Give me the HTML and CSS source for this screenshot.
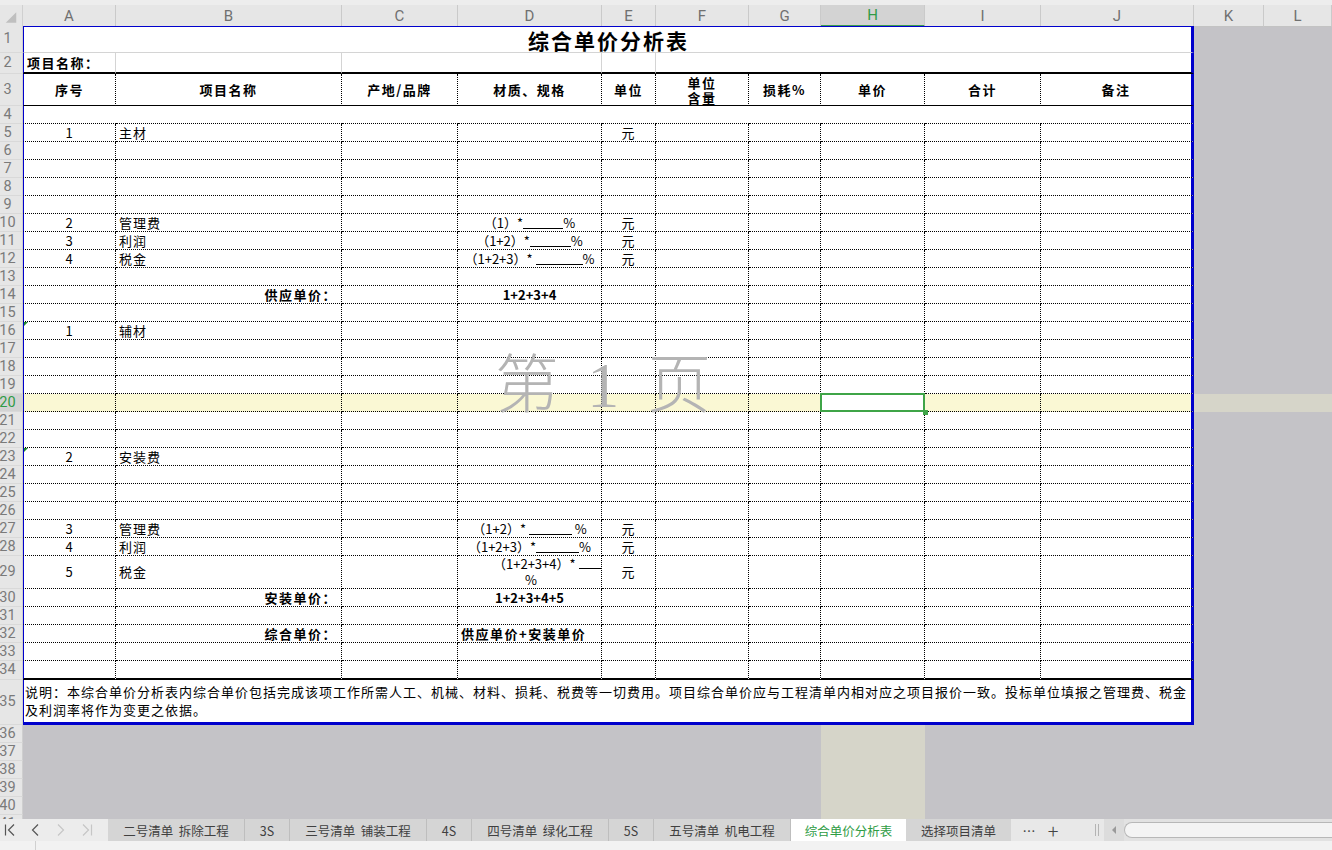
FILE: index.html
```html
<!DOCTYPE html>
<html lang="zh-CN">
<head>
<meta charset="utf-8">
<title>综合单价分析表</title>
<link rel="stylesheet" href="styles.css">
</head>
<body>
<div class="app">
  <div class="sheet">
    <div class="row colhdr">
      <div class="corner"><svg width="23" height="21" viewBox="0 0 23 21"><path d="M17 7 L17 18 L6 18 Z" fill="#bfbfbf"/></svg></div>
      <div>A</div><div>B</div><div>C</div><div>D</div><div>E</div><div>F</div><div>G</div><div class="cur">H</div><div>I</div><div>J</div><div>K</div><div>L</div>
    </div>

    <div class="row t r1"><div class="rh">1</div><div></div><div></div><div></div><div></div><div></div><div></div><div></div><div></div><div></div><div></div><div></div><div></div><div class="ov title">综合单价分析表</div></div>
    <div class="row t r2"><div class="rh">2</div><div class="l b">项目名称：</div><div></div><div></div><div></div><div></div><div></div><div></div><div></div><div></div><div></div><div></div><div></div></div>
    <div class="row t r3 dl"><div class="rh">3</div><div class="c b">序号</div><div class="c b">项目名称</div><div class="c b">产地/品牌</div><div class="c b">材质、规格</div><div class="c b">单位</div><div class="c b"><span class="two">单位<br>含量</span></div><div class="c b">损耗%</div><div class="c b">单价</div><div class="c b">合计</div><div class="c b">备注</div><div></div><div></div></div>
    <div class="row t r4 db"><div class="rh">4</div><div></div><div></div><div></div><div></div><div></div><div></div><div></div><div></div><div></div><div></div><div></div><div></div></div>
    <div class="row t dl db"><div class="rh">5</div><div class="c">1</div><div class="l">主材</div><div></div><div></div><div class="c">元</div><div></div><div></div><div></div><div></div><div></div><div></div><div></div></div>
    <div class="row t dl db"><div class="rh">6</div><div></div><div></div><div></div><div></div><div></div><div></div><div></div><div></div><div></div><div></div><div></div><div></div></div>
    <div class="row t dl db"><div class="rh">7</div><div></div><div></div><div></div><div></div><div></div><div></div><div></div><div></div><div></div><div></div><div></div><div></div></div>
    <div class="row t dl db"><div class="rh">8</div><div></div><div></div><div></div><div></div><div></div><div></div><div></div><div></div><div></div><div></div><div></div><div></div></div>
    <div class="row t dl db"><div class="rh">9</div><div></div><div></div><div></div><div></div><div></div><div></div><div></div><div></div><div></div><div></div><div></div><div></div></div>
    <div class="row t dl db"><div class="rh">10</div><div class="c">2</div><div class="l">管理费</div><div></div><div class="c f">（1）*<span class="bl w40"></span>%</div><div class="c">元</div><div></div><div></div><div></div><div></div><div></div><div></div><div></div></div>
    <div class="row t dl db"><div class="rh">11</div><div class="c">3</div><div class="l">利润</div><div></div><div class="c f">（1+2）*<span class="bl w41"></span>%</div><div class="c">元</div><div></div><div></div><div></div><div></div><div></div><div></div><div></div></div>
    <div class="row t dl db"><div class="rh">12</div><div class="c">4</div><div class="l">税金</div><div></div><div class="c f">（1+2+3）*&nbsp;<span class="bl w47"></span>%</div><div class="c">元</div><div></div><div></div><div></div><div></div><div></div><div></div><div></div></div>
    <div class="row t dl db"><div class="rh">13</div><div></div><div></div><div></div><div></div><div></div><div></div><div></div><div></div><div></div><div></div><div></div><div></div></div>
    <div class="row t dl db"><div class="rh">14</div><div></div><div class="r b">供应单价：</div><div></div><div class="c b f">1+2+3+4</div><div></div><div></div><div></div><div></div><div></div><div></div><div></div><div></div></div>
    <div class="row t dl db"><div class="rh">15</div><div></div><div></div><div></div><div></div><div></div><div></div><div></div><div></div><div></div><div></div><div></div><div></div></div>
    <div class="row t dl db"><div class="rh">16</div><div class="c err">1</div><div class="l">辅材</div><div></div><div></div><div></div><div></div><div></div><div></div><div></div><div></div><div></div><div></div></div>
    <div class="row t dl db"><div class="rh">17</div><div></div><div></div><div></div><div></div><div></div><div></div><div></div><div></div><div></div><div></div><div></div><div></div></div>
    <div class="row t dl db"><div class="rh">18</div><div></div><div></div><div></div><div></div><div></div><div></div><div></div><div></div><div></div><div></div><div></div><div></div></div>
    <div class="row t dl db"><div class="rh">19</div><div></div><div></div><div></div><div></div><div></div><div></div><div></div><div></div><div></div><div></div><div></div><div></div></div>
    <div class="row t dl db sel"><div class="rh">20</div><div></div><div></div><div></div><div></div><div></div><div></div><div></div><div class="selc"></div><div></div><div></div><div></div><div></div></div>
    <div class="row t dl db"><div class="rh">21</div><div></div><div></div><div></div><div></div><div></div><div></div><div></div><div></div><div></div><div></div><div></div><div></div></div>
    <div class="row t dl db"><div class="rh">22</div><div></div><div></div><div></div><div></div><div></div><div></div><div></div><div></div><div></div><div></div><div></div><div></div></div>
    <div class="row t dl db"><div class="rh">23</div><div class="c err">2</div><div class="l">安装费</div><div></div><div></div><div></div><div></div><div></div><div></div><div></div><div></div><div></div><div></div></div>
    <div class="row t dl db"><div class="rh">24</div><div></div><div></div><div></div><div></div><div></div><div></div><div></div><div></div><div></div><div></div><div></div><div></div></div>
    <div class="row t dl db"><div class="rh">25</div><div></div><div></div><div></div><div></div><div></div><div></div><div></div><div></div><div></div><div></div><div></div><div></div></div>
    <div class="row t dl db"><div class="rh">26</div><div></div><div></div><div></div><div></div><div></div><div></div><div></div><div></div><div></div><div></div><div></div><div></div></div>
    <div class="row t dl db"><div class="rh">27</div><div class="c">3</div><div class="l">管理费</div><div></div><div class="c f">（1+2）*&nbsp;<span class="bl w43"></span>&nbsp;%</div><div class="c">元</div><div></div><div></div><div></div><div></div><div></div><div></div><div></div></div>
    <div class="row t dl db"><div class="rh">28</div><div class="c">4</div><div class="l">利润</div><div></div><div class="c f">（1+2+3）*<span class="bl w43"></span>%</div><div class="c">元</div><div></div><div></div><div></div><div></div><div></div><div></div><div></div></div>
    <div class="row t dl db r29"><div class="rh">29</div><div class="c">5</div><div class="l">税金</div><div></div><div class="f d29"><div class="ln1">（1+2+3+4）*&nbsp;<span class="bl w30"></span></div><div class="ln2">%</div></div><div class="c">元</div><div></div><div></div><div></div><div></div><div></div><div></div><div></div></div>
    <div class="row t dl db"><div class="rh">30</div><div></div><div class="r b">安装单价：</div><div></div><div class="c b f">1+2+3+4+5</div><div></div><div></div><div></div><div></div><div></div><div></div><div></div><div></div></div>
    <div class="row t dl db"><div class="rh">31</div><div></div><div></div><div></div><div></div><div></div><div></div><div></div><div></div><div></div><div></div><div></div><div></div></div>
    <div class="row t dl db"><div class="rh">32</div><div></div><div class="r b">综合单价：</div><div></div><div class="l b">供应单价+安装单价</div><div></div><div></div><div></div><div></div><div></div><div></div><div></div><div></div></div>
    <div class="row t dl db"><div class="rh">33</div><div></div><div></div><div></div><div></div><div></div><div></div><div></div><div></div><div></div><div></div><div></div><div></div></div>
    <div class="row t dl r34"><div class="rh">34</div><div></div><div></div><div></div><div></div><div></div><div></div><div></div><div></div><div></div><div></div><div></div><div></div></div>
    <div class="row t r35"><div class="rh">35</div><div></div><div></div><div></div><div></div><div></div><div></div><div></div><div></div><div></div><div></div><div></div><div></div><div class="ov note"><p>说明：本综合单价分析表内综合单价包括完成该项工作所需人工、机械、材料、损耗、税费等一切费用。项目综合单价应与工程清单内相对应之项目报价一致。投标单位填报之管理费、税金<br>及利润率将作为变更之依据。</p></div></div>

    <div class="row g"><div class="rh">36</div><div></div><div></div><div></div><div></div><div></div><div></div><div></div><div></div><div></div><div></div><div></div><div></div></div>
    <div class="row g"><div class="rh">37</div><div></div><div></div><div></div><div></div><div></div><div></div><div></div><div></div><div></div><div></div><div></div><div></div></div>
    <div class="row g"><div class="rh">38</div><div></div><div></div><div></div><div></div><div></div><div></div><div></div><div></div><div></div><div></div><div></div><div></div></div>
    <div class="row g"><div class="rh">39</div><div></div><div></div><div></div><div></div><div></div><div></div><div></div><div></div><div></div><div></div><div></div><div></div></div>
    <div class="row g"><div class="rh">40</div><div></div><div></div><div></div><div></div><div></div><div></div><div></div><div></div><div></div><div></div><div></div><div></div></div>
    <div class="row g"><div class="rh">41</div><div></div><div></div><div></div><div></div><div></div><div></div><div></div><div></div><div></div><div></div><div></div><div></div></div>

    <div class="watermark">第 <span class="wm-num">1</span> 页</div>
  </div>

  <div class="tabbar">
    <div class="nav">
      <svg width="108" height="22" viewBox="0 0 108 22">
        <g fill="none" stroke-width="1.2">
          <path d="M5.5 5.5 V16.5" stroke="#555"/>
          <path d="M14 5.5 L8.5 11 L14 16.5" stroke="#555"/>
          <path d="M38 5.5 L32.5 11 L38 16.5" stroke="#555"/>
          <path d="M58 5.5 L63.5 11 L58 16.5" stroke="#c6c6c6"/>
          <path d="M83 5.5 L88.5 11 L83 16.5" stroke="#c6c6c6"/>
          <path d="M91.5 5.5 V16.5" stroke="#c6c6c6"/>
        </g>
      </svg>
    </div>
    <div class="tabs">
      <div class="tab wd">二号清单  拆除工程</div>
      <div class="tab sm">3S</div>
      <div class="tab wd">三号清单  铺装工程</div>
      <div class="tab sm">4S</div>
      <div class="tab wd">四号清单  绿化工程</div>
      <div class="tab sm">5S</div>
      <div class="tab wd">五号清单  机电工程</div>
      <div class="tab on">综合单价分析表</div>
      <div class="tab last">选择项目清单</div>
    </div>
    <div class="more">⋯</div>
    <div class="add">+</div>
    <div class="split"></div>
    <div class="hscroll">
      <div class="harrow"><svg width="6" height="8" viewBox="0 0 6 8"><path d="M5 0 L1 4 L5 8 Z" fill="#9a9a9a"/></svg></div>
      <div class="thumb"></div>
    </div>
  </div>
  <div class="status">
    <div class="st-icon"><svg width="12" height="9" viewBox="0 0 12 9"><path d="M2.5 3.5 H9.5 V9" fill="none" stroke="#8a8a8a"/></svg></div>
  </div>
</div>
</body>
</html>
```

FILE: styles.css
```css
* { box-sizing: border-box; margin: 0; padding: 0; }
html, body { width: 1332px; height: 850px; overflow: hidden; }
body { background: #c4c3c7; font-family: "Noto Sans CJK SC", "Noto Sans", sans-serif; color: #000; }

.app { display: flex; flex-direction: column; height: 850px; }
.sheet { position: relative; height: 819px; overflow: hidden; display: flex; flex-direction: column; flex: none; }

.row {
  display: grid;
  grid-template-columns: 23px 93px 226px 116px 144px 54px 93px 72px 104px 116px 153px 70px 1fr;
  height: 18px;
  flex: none;
}
.row > * { grid-row: 1; min-width: 0; display: flex; align-items: center; white-space: nowrap; }
.row > :nth-child(1) { grid-column: 1; }
.row > :nth-child(2) { grid-column: 2; }
.row > :nth-child(3) { grid-column: 3; }
.row > :nth-child(4) { grid-column: 4; }
.row > :nth-child(5) { grid-column: 5; }
.row > :nth-child(6) { grid-column: 6; }
.row > :nth-child(7) { grid-column: 7; }
.row > :nth-child(8) { grid-column: 8; }
.row > :nth-child(9) { grid-column: 9; }
.row > :nth-child(10) { grid-column: 10; }
.row > :nth-child(11) { grid-column: 11; }
.row > :nth-child(12) { grid-column: 12; }
.row > :nth-child(13) { grid-column: 13; }
.row > .ov { grid-column: 2 / 12; z-index: 1; }

/* column header */
.colhdr { height: 26px; padding-top: 5px; background: #ededed; }
.colhdr > * {
  background: #e6e6e6; border-right: 1px solid #cacaca; border-bottom: 1px solid #c3c3c3;
  justify-content: center; font-family: Roboto, "Liberation Sans", sans-serif; font-size: 15px; color: #707070;
}
.colhdr > .corner { align-items: stretch; justify-content: flex-start; border-right-color: #d0d0d0; }
.colhdr > .cur { background: #d3d3d3; color: #2f9b47; border-bottom: 2px solid #3b9e4f; }

/* row header */
.row > .rh {
  background: #e6e6e6; border-right: 1px solid #cfcfcf; border-bottom: 1px solid #d9d9d9;
  justify-content: center; padding-right: 7px;
  font-family: Roboto, "Liberation Sans", sans-serif; font-size: 14.5px; color: #7a7a7a; letter-spacing: 0;
}
.sel > .rh { background: #d3d3d3; color: #2f9b47; }

/* table cells */
.t > * { font-size: 13px; letter-spacing: 1px; line-height: 16px; }
.t > :nth-child(n+2):nth-child(-n+11) { background: #fff; }
.t > :nth-child(9) { background: #faf8d4; }
.t > :nth-child(2) { border-left: 1px solid #0000cc; }
.t > :nth-child(11) { border-right: 3px solid #0000cc; }
.dl > :nth-child(n+2):nth-child(-n+10) { border-right: 1px dotted #000; }
.db > :nth-child(n+2):nth-child(-n+11) { border-bottom: 1px dotted #000; }

.r1 { height: 27px; }
.r1 > :nth-child(n+2):nth-child(-n+11) { border-top: 1px solid #0000cc; border-bottom: 1px solid #d4d4d4; }
.r2 { height: 21px; }
.r2 > :nth-child(n+2):nth-child(-n+11) { border-bottom: 2px solid #000; }
.r2 > :nth-child(2), .r2 > :nth-child(3), .r2 > :nth-child(5), .r2 > :nth-child(6) { border-right: 1px solid #d4d4d4; }
.r3 { height: 32px; }
.r3 > :nth-child(n+2):nth-child(-n+11) { border-bottom: 1px solid #000; }
.r29 { height: 33px; }
.r34 { height: 19px; }
.r34 > :nth-child(n+2):nth-child(-n+11) { border-bottom: 2px solid #000; }
.r35 { height: 45px; }
.r35 > :nth-child(n+2):nth-child(-n+11) { border-bottom: 3px solid #0000cc; }

.sel > :nth-child(n+2):nth-child(-n+11) { background: #faf8d4; }
.sel > :nth-child(12), .sel > :nth-child(13) { background: #d6d5c9; }
.t.sel > .selc:nth-child(9) { background: #fff; position: relative; z-index: 2; }
.selc::after { content: ""; position: absolute; left: -1px; top: -1px; right: -1px; bottom: -1px; border: 2px solid #3fa447; }
.selc::before { content: ""; position: absolute; right: -4px; bottom: -4px; width: 5px; height: 5px; background: #3fa447; z-index: 1; }

.g > :nth-child(9) { background: #d6d5c9; }

.c { justify-content: center; }
.l { padding-left: 3px; }
.r { justify-content: flex-end; padding-right: 4px; }
.b { font-weight: 700; letter-spacing: 1.5px; }
.f { letter-spacing: 0; }
.b.f { letter-spacing: 0; }
.two { text-align: center; line-height: 15px; }

.bl { display: inline-block; height: 12px; border-bottom: 1px solid #000; }
.w30 { width: 30px; }
.w40 { width: 40px; }
.w41 { width: 41px; }
.w43 { width: 43px; }
.w47 { width: 47px; }

.row > .d29 { display: block; overflow: hidden; line-height: 16px; }
.ln1 { padding-left: 35px; }
.ln2 { padding-left: 67px; }

.err { position: relative; }
.err::before { content: ""; position: absolute; left: 0; top: 0; border-top: 4px solid #1f8a2e; border-right: 4px solid transparent; }

.title { justify-content: center; align-items: flex-end; padding-bottom: 1px; font-size: 21px; font-weight: 700; letter-spacing: 2px; line-height: 24px; }
.note { align-items: center; padding-left: 2px; padding-bottom: 3px; font-size: 13px; letter-spacing: 1px; line-height: 18px; }

.watermark {
  position: absolute; left: 495px; top: 347px;
  font-family: "Noto Sans CJK SC", sans-serif; font-size: 64px; line-height: 64px; font-weight: 300;
  color: #b4b4b4; word-spacing: 14px; white-space: nowrap; pointer-events: none; z-index: 3;
}
.wm-num { font-family: "Liberation Serif", serif; }

/* tab bar */
.tabbar { height: 22px; display: flex; background: #e8e8e8; flex: none; font-family: "Noto Sans CJK SC", sans-serif; font-size: 12.5px; color: #404040; }
.nav { width: 108px; flex: none; background: #ececec; display: flex; }
.tabs { display: flex; background: #d5d5d5; }
.tab { display: flex; align-items: center; justify-content: center; white-space: pre; border-right: 1px solid #bebebe; }
.tab.wd { width: 137px; }
.tab.sm { width: 45px; }
.tab.on { width: 115px; background: #fff; color: #2e9c44; border-right: none; }
.tab.last { width: 105px; border-right: none; }
.more { width: 18px; margin-left: 9px; display: flex; align-items: center; justify-content: center; color: #444; font-size: 13px; }
.add { width: 18px; margin-left: 6px; display: flex; align-items: center; justify-content: center; color: #444; font-size: 20px; font-weight: 300; }
.split { width: 4px; height: 12px; margin: 5px 0 0 33px; border-left: 1px solid #b4b4b4; border-right: 1px solid #b4b4b4; }
.hscroll { flex: 1; display: flex; align-items: center; margin-left: 5px; background: #e2e2e2; }
.harrow { width: 20px; height: 22px; display: flex; align-items: center; justify-content: center; background: #dcdcdc; }
.thumb { flex: 1; height: 16px; background: #f4f4f4; border: 1px solid #b8b8b8; border-right: none; border-radius: 8px 0 0 8px; }

.status { flex: 1; background: #f2f2f2; display: flex; }
.st-icon { width: 36px; border-right: 1px solid #d0d0d0; padding-left: 1px; }
```
